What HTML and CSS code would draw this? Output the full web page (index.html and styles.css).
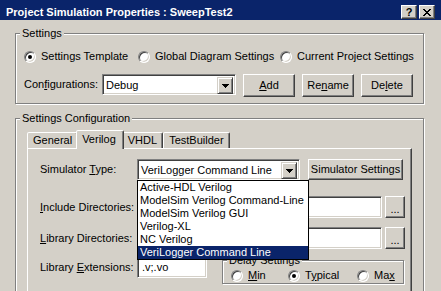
FILE: index.html
```html
<!DOCTYPE html>
<html>
<head>
<meta charset="utf-8">
<link rel="stylesheet" href="styles.css">
</head>
<body>
<div class="window">
  <div class="titlebar">
    <span class="title">Project Simulation Properties : SweepTest2</span>
    <div class="caption-buttons">
      <span class="cap-btn help">?</span>
      <span class="cap-btn close">
        <svg width="8" height="7" viewBox="0 0 8 7"><path d="M0 0h2v1H0z M6 0h2v1H6z M1 1h2v1H1z M5 1h2v1H5z M2 2h4v1H2z M3 3h2v1H3z M2 4h4v1H2z M1 5h2v1H1z M5 5h2v1H5z M0 6h2v1H0z M6 6h2v1H6z" fill="#000"/></svg>
      </span>
    </div>
  </div>
  <div class="client">
    <div class="group settings">
      <span class="group-title">Settings</span>
      <div class="radio-row">
        <span class="radio-item"><span class="radio checked"></span>Settings Template</span>
        <span class="radio-item"><span class="radio"></span>Global Diagram Settings</span>
        <span class="radio-item"><span class="radio"></span>Current Project Settings</span>
      </div>
      <div class="config-row">
        <span class="config-label">Con<u>f</u>igurations:</span>
        <div class="combo config-combo">
          <span class="combo-text">Debug</span>
          <span class="combo-btn"><svg width="7" height="4" viewBox="0 0 7 4"><path d="M0 0h7v1H0z M1 1h5v1H1z M2 2h3v1H2z M3 3h1v1H3z" fill="#000"/></svg></span>
        </div>
        <span class="button cfg-btn"><u>A</u>dd</span>
        <span class="button cfg-btn">Re<u>n</u>ame</span>
        <span class="button cfg-btn">De<u>l</u>ete</span>
      </div>
    </div>

    <div class="group configuration">
      <span class="group-title">Settings Configuration</span>
      <div class="tabs">
        <span class="tab">General</span>
        <span class="tab selected">Verilog</span>
        <span class="tab">VHDL</span>
        <span class="tab">TestBuilder</span>
      </div>
      <div class="panel">
        <div class="form-row sim-row">
          <span class="field-label">Simulator <u>T</u>ype:</span>
          <div class="combo-wrap">
            <div class="combo sim-combo">
              <span class="combo-text">VeriLogger Command Line</span>
              <span class="combo-btn"><svg width="7" height="4" viewBox="0 0 7 4"><path d="M0 0h7v1H0z M1 1h5v1H1z M2 2h3v1H2z M3 3h1v1H3z" fill="#000"/></svg></span>
            </div>
            <ul class="dropdown">
              <li>Active-HDL Verilog</li>
              <li>ModelSim Verilog Command-Line</li>
              <li>ModelSim Verilog GUI</li>
              <li>Verilog-XL</li>
              <li>NC Verilog</li>
              <li class="highlighted">VeriLogger Command Line</li>
            </ul>
          </div>
          <span class="button sim-settings">Simulator Settin<u>g</u>s</span>
        </div>
        <div class="form-row dir-row include-row">
          <span class="field-label"><u>I</u>nclude Directories:</span>
          <span class="edit dir-edit"></span>
          <span class="button browse">...</span>
        </div>
        <div class="form-row dir-row libdir-row">
          <span class="field-label"><u>L</u>ibrary Directories:</span>
          <span class="edit dir-edit"></span>
          <span class="button browse">...</span>
        </div>
        <div class="form-row ext-row">
          <span class="field-label ext-label">Library <u>E</u>xtensions:</span>
          <span class="edit ext-edit">.v;.vo</span>
          <div class="group delay">
            <span class="group-title">Delay Settings</span>
            <div class="delay-radios">
              <span class="radio-item"><span class="radio"></span><span><u>M</u>in</span></span>
              <span class="radio-item"><span class="radio checked"></span><span>T<u>y</u>pical</span></span>
              <span class="radio-item"><span class="radio"></span><span>Ma<u>x</u></span></span>
            </div>
          </div>
        </div>
      </div>
    </div>
  </div>
</div>
</body>
</html>
```

FILE: styles.css
```css
* { box-sizing: border-box; }

html, body {
  margin: 0;
  padding: 0;
}

body {
  width: 441px;
  height: 291px;
  overflow: hidden;
  background: #d4d0c8;
  font: 11px/13px "Liberation Sans", Arial, sans-serif;
  color: #000;
}

.window {
  width: 441px;
  height: 291px;
  overflow: hidden;
}

/* Title bar */
.titlebar {
  height: 20px;
  background: #0a246a;
  color: #fff;
  display: flex;
  align-items: center;
  justify-content: space-between;
  padding: 4px 6px 0 6px;
  font-weight: bold;
}

.caption-buttons {
  display: flex;
  gap: 2px;
}

.cap-btn {
  width: 16px;
  height: 14px;
  background: #d4d0c8;
  border: 1px solid;
  border-color: #fff #404040 #404040 #fff;
  box-shadow: inset -1px -1px 0 #808080;
  display: flex;
  align-items: center;
  justify-content: center;
  color: #000;
  font-size: 11px;
  line-height: 12px;
}

/* Client area */
.client {
  padding: 0 17px 0 15px;
}

.group {
  position: relative;
  border: 1px solid #808080;
  box-shadow: inset 1px 1px 0 #fff, 1px 1px 0 #fff;
}

.group-title {
  position: absolute;
  top: -7px;
  left: 4px;
  padding: 0 2px;
  background: #d4d0c8;
  line-height: 13px;
  white-space: nowrap;
}

.settings {
  margin-top: 13px;
  padding: 16px 8px 6px 8px;
}

.radio-row {
  display: grid;
  grid-template-columns: 114px 142px auto;
  height: 13px;
}

.radio-item {
  display: flex;
  align-items: center;
  gap: 5px;
  white-space: nowrap;
}

.radio {
  position: relative;
  flex: none;
  width: 12px;
  height: 12px;
  border-radius: 50%;
  background: #fff;
  border: 1px solid;
  border-color: #808080 #fff #fff #808080;
  box-shadow: inset 1px 1px 0 #404040, inset -1px -1px 0 #d4d0c8;
}

.radio.checked::after {
  content: "";
  position: absolute;
  left: 3px;
  top: 3px;
  width: 4px;
  height: 4px;
  border-radius: 50%;
  background: #000;
}

.config-row {
  display: flex;
  align-items: flex-start;
  margin-top: 11px;
  height: 23px;
}

.config-label {
  width: 78px;
  line-height: 21px;
  white-space: nowrap;
}

/* Combo box */
.combo {
  display: flex;
  height: 21px;
  padding: 2px;
  background: #fff;
  border: 1px solid;
  border-color: #808080 #fff #fff #808080;
  box-shadow: inset 1px 1px 0 #404040, inset -1px -1px 0 #d4d0c8;
}

.combo-text {
  flex: 1;
  line-height: 17px;
  padding-left: 1px;
  white-space: nowrap;
  overflow: hidden;
}

.combo-btn {
  flex: none;
  width: 16px;
  height: 17px;
  background: #d4d0c8;
  border: 1px solid;
  border-color: #d4d0c8 #404040 #404040 #d4d0c8;
  box-shadow: inset 1px 1px 0 #fff, inset -1px -1px 0 #808080;
  display: flex;
  align-items: center;
  justify-content: center;
}

.config-combo {
  width: 134px;
}

/* Buttons */
.button {
  height: 23px;
  background: #d4d0c8;
  border: 1px solid;
  border-color: #fff #404040 #404040 #fff;
  box-shadow: inset -1px -1px 0 #808080;
  display: flex;
  align-items: center;
  justify-content: center;
  white-space: nowrap;
}

.cfg-btn {
  width: 52px;
  margin-left: 7px;
}

/* Settings Configuration */
.configuration {
  margin-top: 14px;
  padding: 11px 0 0 0;
  height: 200px;
}

.tabs {
  display: flex;
  align-items: flex-end;
  height: 18px;
  margin: 0 11px;
}

.tab {
  height: 16px;
  padding: 1px 5px 0 5px;
  border: 1px solid;
  border-bottom: none;
  border-color: #fff #404040 transparent #fff;
  border-radius: 2px 2px 0 0;
  box-shadow: inset -1px 0 0 #808080;
  background: #d4d0c8;
  line-height: 13px;
  white-space: nowrap;
}

.tab.selected {
  position: relative;
  z-index: 1;
  height: 19px;
  padding-top: 2px;
  margin: 0 -2px -1px -2px;
  padding-left: 5px;
  padding-right: 7px;
}

.panel {
  margin: 0 11px;
  height: 170px;
  border-top: 1px solid #fff;
  border-left: 1px solid #fff;
  border-right: 1px solid #404040;
  box-shadow: inset -1px 0 0 #808080;
  padding: 0 0 0 12px;
}

.form-row {
  display: flex;
  align-items: center;
}

.field-label {
  width: 97px;
  flex: none;
  white-space: nowrap;
}

.sim-row {
  margin-top: 10px;
  height: 21px;
}

.combo-wrap {
  position: relative;
}

.sim-combo {
  width: 163px;
}

.sim-settings {
  width: 95px;
  height: 21px;
  margin-left: 8px;
}

.dropdown {
  position: absolute;
  z-index: 10;
  top: 100%;
  left: 0;
  width: 172px;
  margin: 0;
  padding: 0;
  list-style: none;
  background: #fff;
  border: 1px solid #000;
}

.dropdown li {
  height: 13px;
  line-height: 13px;
  padding-left: 2px;
  white-space: nowrap;
}

.dropdown li.highlighted {
  background: #0a246a;
  color: #fff;
}

.edit {
  background: #fff;
  border: 1px solid;
  border-color: #808080 #fff #fff #808080;
  box-shadow: inset 1px 1px 0 #404040, inset -1px -1px 0 #d4d0c8;
  padding: 0 4px;
  white-space: nowrap;
}

.dir-row {
  height: 22px;
}

.include-row {
  margin-top: 16px;
}

.libdir-row {
  margin-top: 9px;
}

.dir-edit {
  width: 245px;
  height: 22px;
}

.browse {
  width: 20px;
  height: 22px;
  margin-left: 3px;
  padding-top: 4px;
}

.ext-row {
  align-items: flex-start;
  margin-top: 8px;
}

.ext-label {
  line-height: 21px;
}

.ext-edit {
  width: 70px;
  height: 21px;
  line-height: 19px;
}

.delay {
  width: 182px;
  margin-left: 15px;
  margin-top: 3px;
  padding: 8px 0 1px 8px;
}

.delay-radios {
  display: grid;
  grid-template-columns: 57px 69px auto;
  height: 13px;
}
```
